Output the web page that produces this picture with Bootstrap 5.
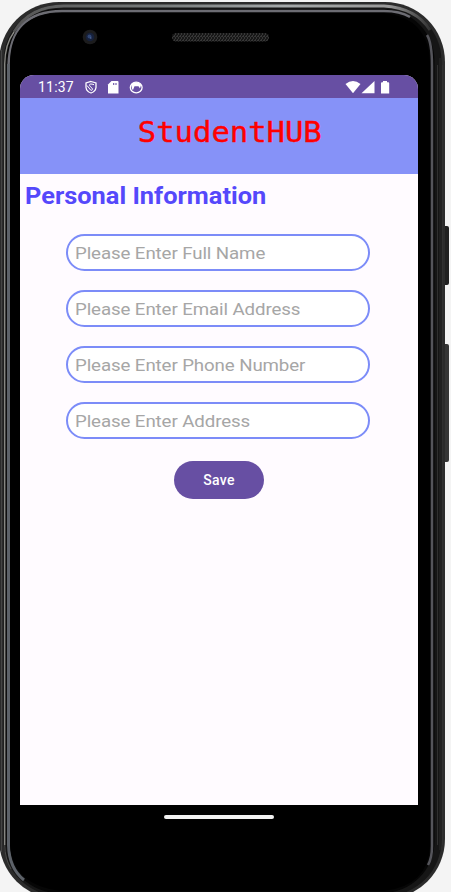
<!DOCTYPE html>
<html lang="en">
<head>
<meta charset="utf-8">
<meta name="viewport" content="width=device-width, initial-scale=1">
<title>StudentHUB</title>
<link href="https://cdn.jsdelivr.net/npm/bootstrap@5.3.0/dist/css/bootstrap.min.css" rel="stylesheet">
<style>
body{background:#f4f4f4;font-family:Roboto,"Liberation Sans",sans-serif}
.phone{width:451px;height:892px;padding:75px 33px 0 20px}
.shell{left:0;top:0}
.screen{width:398px;height:730px;background:#fffbff;border-radius:14px 14px 0 0}
.statusbar{height:23px;background:#674fa3;padding:0 28px 0 18px}
.clock{font-size:14px;line-height:23px;letter-spacing:.2px;padding-top:1px}
.brandbar{height:76px;background:#8692f8;padding-left:21px}
.brand{font:28.500px/34px "DejaVu Sans Mono",monospace;transform:scaleX(1.072);color:#f00;-webkit-text-stroke:.4px #f00;margin-top:-6px}
.heading{font-size:23px;line-height:28px;font-weight:700;color:#5548fb;margin:9px 0 0 5px;width:max-content;transform:scaleX(1.104);transform-origin:left}
.fields{margin:23px 48px 0 46px;width:304px;gap:19px}
.field{height:37px;border:2px solid #7c8cf8;border-radius:18.5px;background:#fff;padding:0 7px;overflow:hidden}
.field input{font-size:17px;line-height:34px;height:34px;width:250px;letter-spacing:-.1px;transform:scaleX(1.1);transform-origin:left;outline:0;color:#222}
.field input::placeholder{color:#a6a6a6;opacity:1}
.save{--bs-btn-bg:#674fa3;--bs-btn-color:#fff;--bs-btn-hover-bg:#5a4492;--bs-btn-hover-color:#fff;width:90px;height:38px;margin:22px 0 0 154px;font-size:14px;font-weight:500;letter-spacing:.3px;padding:0}
.homebar{width:110px;height:4px;margin:10px 0 0 143.5px;background:#f2f2f2}
</style>
</head>
<body class="overflow-hidden">
<div class="phone position-relative">
<svg class="shell position-absolute" width="451" height="892" aria-hidden="true">
  <defs>
    <linearGradient id="top" x1="0" x2="1" y1="0" y2="0"><stop offset="0" stop-color="#555"/><stop offset=".35" stop-color="#777b7b"/><stop offset=".65" stop-color="#a5a9aa"/><stop offset=".9" stop-color="#999"/><stop offset="1" stop-color="#333"/></linearGradient>
    <pattern id="mesh" width="3" height="4" patternUnits="userSpaceOnUse"><path d="M0 0L2 2L0 4M2 0L3 1" stroke="#454545" stroke-width=".7" fill="none"/></pattern>
  </defs>
  <rect x="442" y="226" width="7" height="59" rx="2" fill="#202020"/>
  <rect x="442" y="344" width="7" height="118" rx="2" fill="#363636"/>
  <rect x="-1" y="2" width="446" height="897" rx="60" fill="#2b2b2b"/>
  <rect x="3.500" y="5" width="438" height="891" rx="56" fill="#161616"/>
  <path d="M14 32Q30 6 64 6H384Q416 8 430 30" fill="none" stroke="url(#top)" stroke-width="3"/>
  <path d="M4.700 845V64Q5 44 14 32" fill="none" stroke="#8b8b86" stroke-width="1.300"/>
  <path d="M4.700 845Q5 859 11 869" fill="none" stroke="#4c4c4a"/>
  <path d="M1.500 50V852" stroke="#444"/>
  <path d="M442.500 65V845M437.500 65V845" stroke="#303030"/>
  <path d="M440 58V850" stroke="#202020" stroke-width="2"/>
  <rect x="6.500" y="9" width="428" height="884" rx="52" fill="#060606"/>
  <path d="M8.500 66Q10 11 62 11H384Q400 11 410 17" fill="none" stroke="#6c6c73" stroke-width="2.500"/>
  <path d="M8.500 64V845Q9 868 24 880" fill="none" stroke="#5d6269" stroke-width="3"/>
  <path d="M427 35Q432 43 432 66V846Q432 858 428 865" fill="none" stroke="#55555b" stroke-width="2.500"/>
  <path d="M10 64Q10 13 62 13H384Q430 18 430 66V846Q428 886 384 891H62Q13 886 10 845Z" fill="#000"/>
  <circle cx="90" cy="37" r="7.300" fill="#1c1c1d"/><circle cx="90" cy="37" r="4.300" fill="#17213b"/><circle cx="89.500" cy="36.500" r="2" fill="#304675"/><circle cx="90.800" cy="38" r=".8" fill="#526ca0"/>
  <rect x="172" y="33" width="97" height="8.500" rx="4.200" fill="#181818"/><rect x="172" y="33" width="97" height="8.500" rx="4.200" fill="url(#mesh)"/>
</svg>
<main class="screen position-relative overflow-hidden">
  <div class="statusbar d-flex align-items-center text-white">
    <span class="clock">11:37</span>
    <svg width="62" height="16" viewBox="82 78 62 16" class="ms-2" aria-hidden="true">
      <path d="M91 80.500L96 82V86.500Q95.500 90.500 91 92Q86.500 90.500 86 86.500V82Z" fill="none" stroke="#fff" stroke-width="1.300"/>
      <path d="M94 83.700Q89.500 82 89.500 84.300Q89.800 85.500 91.500 86.500Q93.500 88 91.500 89.700M87 84.500L91 89.500" fill="none" stroke="#fff" stroke-width="1"/>
      <path d="M111.500 80H117.500Q118.500 80 118.500 81V92.500H108V83.500Z" fill="#fff"/><path d="M113.700 82V84M116 82V84" stroke="#674fa3" stroke-width="1.100"/>
      <ellipse cx="136.200" cy="86.500" rx="5.900" ry="5.400" fill="none" stroke="#fff" stroke-width="1.300"/><path d="M131.200 83.500Q136 79 141.200 83.500L140 87.500L138.500 85.200H134.500L133 89L132 88Z" fill="#fff"/>
    </svg>
    <svg width="46" height="16" viewBox="344 78 46 16" class="ms-auto" aria-hidden="true" fill="#fff">
      <path d="M345.500 83Q353 77 360.500 83L353 92.200Z"/><path d="M361.500 92.200L374.500 80V92.200Z"/><path d="M383 80H387V81.200H388.300Q389.200 81.200 389.200 82.200V92.500H381V82.200Q381 81.200 382 81.200H383Z"/>
    </svg>
  </div>
  <header class="brandbar d-flex align-items-center justify-content-center"><div class="brand">StudentHUB</div></header>
  <h1 class="heading">Personal Information</h1>
  <form>
    <div class="fields d-flex flex-column">
      <div class="field"><input class="border-0 bg-transparent p-0 d-block" type="text" placeholder="Please Enter Full Name" aria-label="Full name"></div>
      <div class="field"><input class="border-0 bg-transparent p-0 d-block" type="email" placeholder="Please Enter Email Address" aria-label="Email address"></div>
      <div class="field"><input class="border-0 bg-transparent p-0 d-block" type="tel" placeholder="Please Enter Phone Number" aria-label="Phone number"></div>
      <div class="field"><input class="border-0 bg-transparent p-0 d-block" type="text" placeholder="Please Enter Address" aria-label="Address"></div>
    </div>
    <button class="save btn rounded-pill border-0" type="button">Save</button>
  </form>
</main>
<div class="homebar rounded-pill position-relative"></div>
</div>
<script src="https://cdn.jsdelivr.net/npm/bootstrap@5.3.0/dist/js/bootstrap.bundle.min.js"></script>
</body>
</html>
